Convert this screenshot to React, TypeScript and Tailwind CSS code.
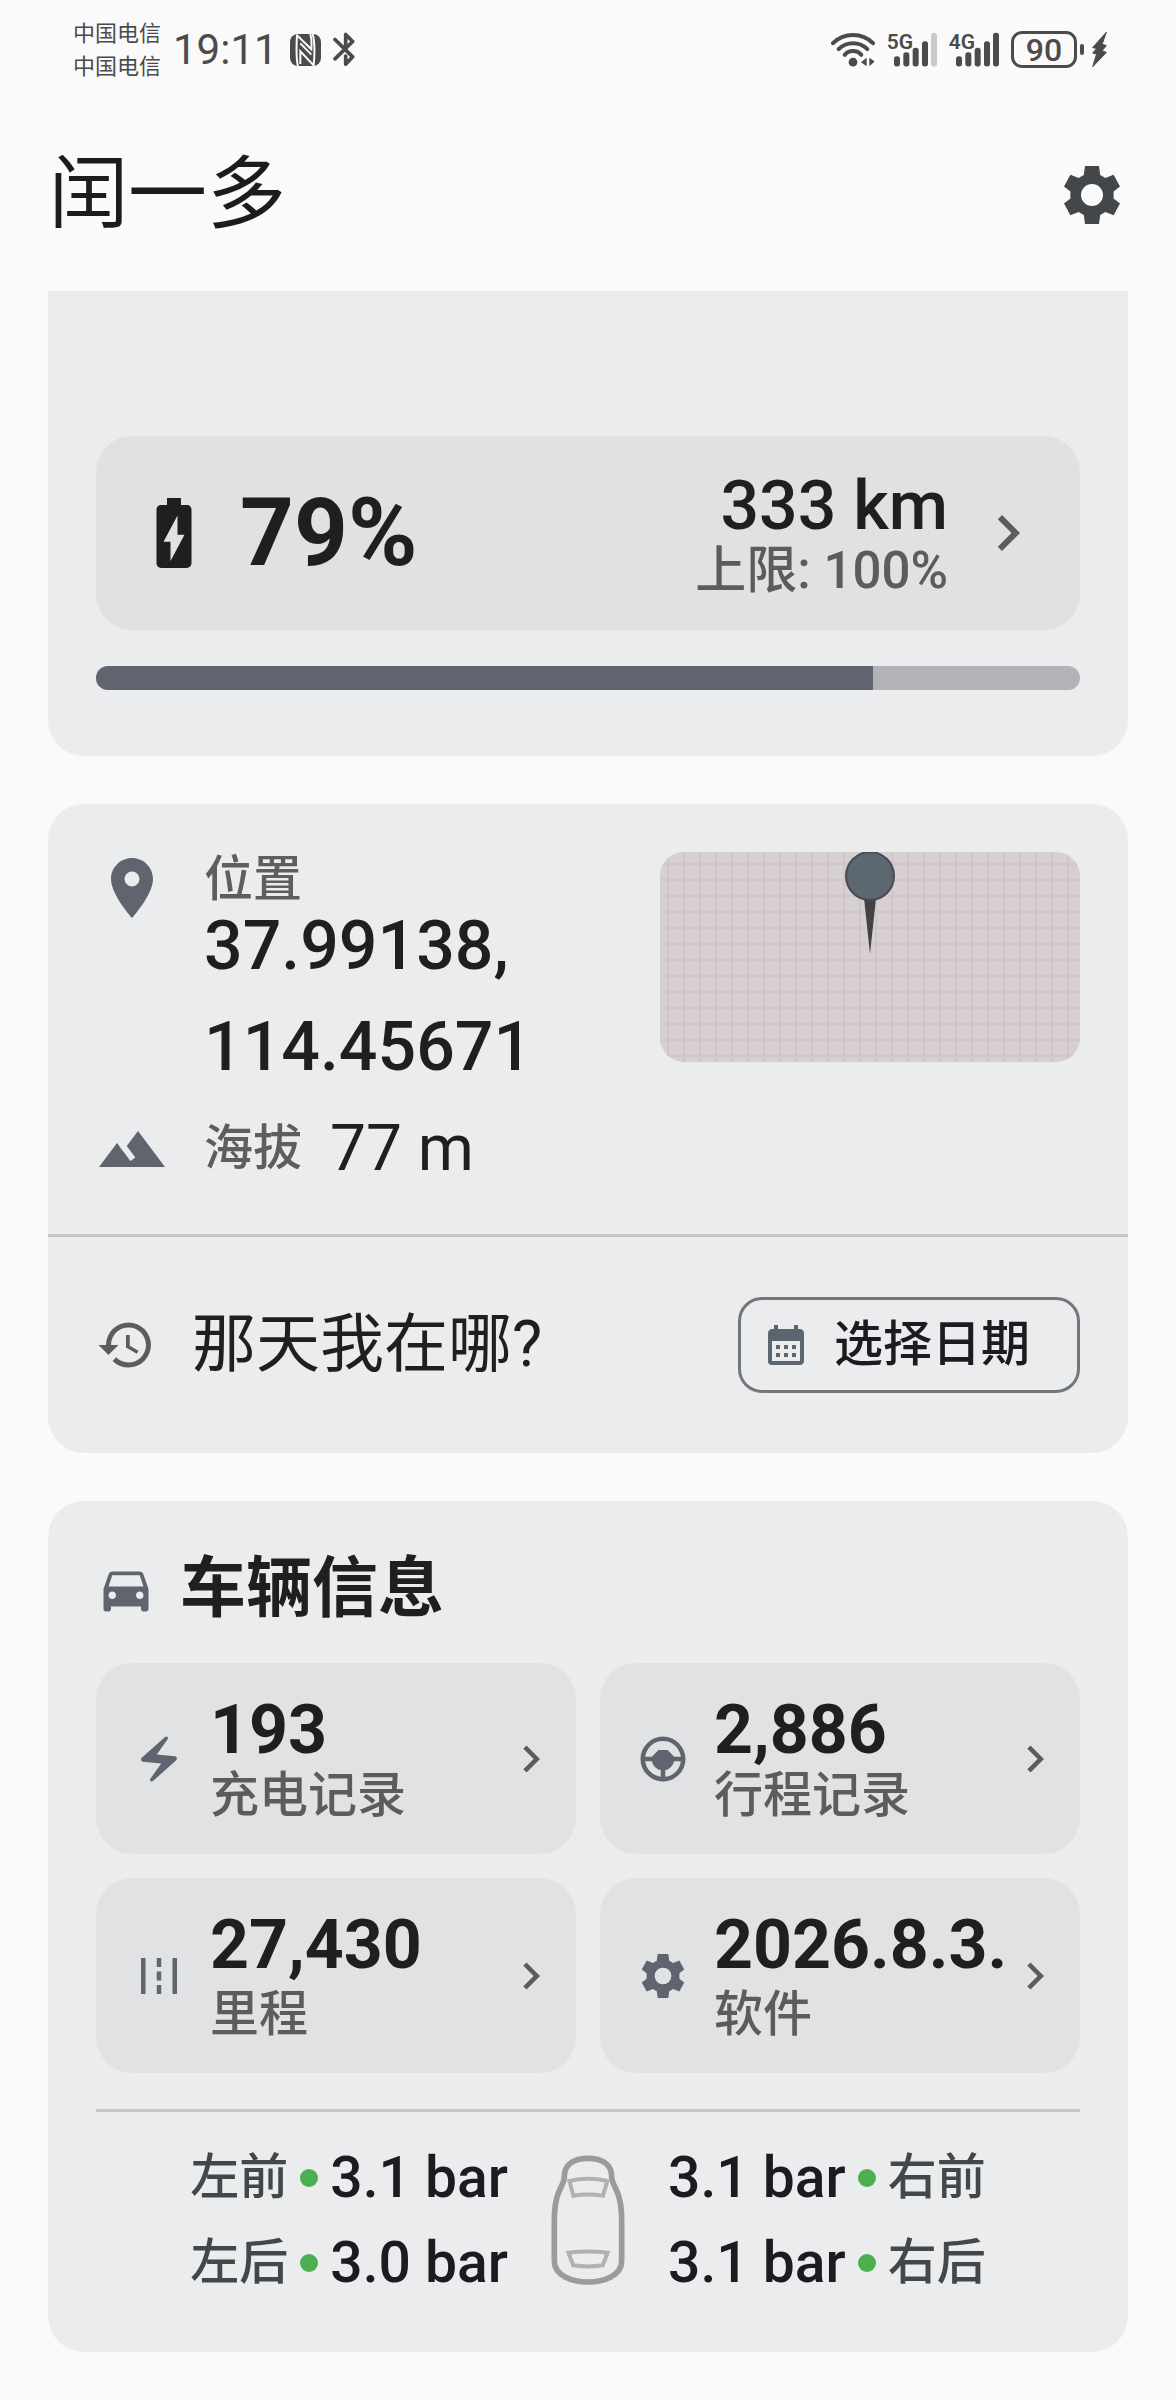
import type { ReactNode } from 'react';
import {
  MdBatteryChargingFull,
  MdCalendarMonth,
  MdChevronRight,
  MdDirectionsCar,
  MdElectricBolt,
  MdHistory,
  MdLocationOn,
  MdTerrain,
} from 'react-icons/md';

const charge = 79;

function GearIcon({ className }: { className: string }) {
  return (
    <svg viewBox="-29 -29 58 58" className={className} fill="currentColor" aria-hidden="true">
      <path
        fillRule="evenodd"
        d="M-7-29H7L8.2-20 13.4-17 21.6-20.3 28-8.6 21.6-3.6V3.6L28 8.6 21.6 20.3 13.4 17 8.2 20 7 29H-7L-8.2 20-13.4 17-21.6 20.3-28 8.6-21.6 3.6V-3.6L-28-8.6-21.6-20.3-13.4-17-8.2-20ZM11 0A11 11 0 1 0-11 0 11 11 0 1 0 11 0Z"
      />
    </svg>
  );
}

function SteeringIcon({ className }: { className: string }) {
  return (
    <svg viewBox="0 0 24 24" className={className} fill="currentColor" aria-hidden="true">
      <path d="M13,19.92C14.8,19.7 16.35,18.95 17.65,17.65C18.95,16.35 19.7,14.8 19.92,13H16.92C16.7,14 16.24,14.84 15.54,15.54C14.84,16.24 14,16.7 13,16.92V19.92M10,8H14L17,11H19.92C19.67,9.05 18.79,7.38 17.27,6C15.76,4.66 14,4 12,4C10,4 8.24,4.66 6.73,6C5.21,7.38 4.33,9.05 4.08,11H7L10,8M11,19.92V16.92C10,16.7 9.16,16.24 8.46,15.54C7.76,14.84 7.3,14 7.08,13H4.08C4.3,14.77 5.05,16.3 6.35,17.6C7.65,18.9 9.2,19.67 11,19.92M12,2C14.75,2 17.1,3 19.05,4.95C21,6.9 22,9.25 22,12C22,14.75 21,17.1 19.05,19.05C17.1,21 14.75,22 12,22C9.25,22 6.9,21 4.95,19.05C3,17.1 2,14.75 2,12C2,9.25 3,6.9 4.95,4.95C6.9,3 9.25,2 12,2Z" />
    </svg>
  );
}

function RoadIcon({ className }: { className: string }) {
  return (
    <svg viewBox="0 0 24 24" className={className} fill="currentColor" aria-hidden="true">
      <path d="M4 4h2v16H4zM18 4h2v16h-2zM11 4h2v4h-2zM11 10h2v4h-2zM11 16h2v4h-2z" />
    </svg>
  );
}

function Signal({ label, weak }: { label: string; weak?: boolean }) {
  return (
    <svg viewBox="0 0 150 116" className="w-[50px] h-[39px] mb-1 overflow-visible" fill="currentColor">
      <text x="-1" y="63" fontSize="63" fontWeight="600" fontFamily="'Liberation Sans Narrow', Roboto, sans-serif">
        {label}
      </text>
      <rect x="21" y="84" width="18" height="31" rx="8" />
      <rect x="49" y="72" width="18" height="43" rx="8" />
      <rect x="77" y="59" width="18" height="56" rx="8" />
      <rect x="105" y="39" width="18" height="76" rx="8" />
      <rect x="132" y="14" width="18" height="101" rx="8" opacity={weak ? 0.28 : 1} />
    </svg>
  );
}

function StatusBar() {
  return (
    <div className="h-[99px] pl-[73px] pr-[69px] flex items-center justify-between text-[#4b4b4b]">
      <div className="flex items-center">
        <div className="text-[22px] leading-[33px]">
          <p>中国电信</p>
          <p>中国电信</p>
        </div>
        <span className="ml-3 text-[42px] leading-[48px]">19:11</span>
        {/* NFC */}
        <svg viewBox="0 0 93 96" className="ml-3 w-[31px] h-8" aria-hidden="true">
          <rect width="93" height="96" rx="24" fill="currentColor" />
          <g fill="none" stroke="#fafafa" strokeWidth="6">
            <path d="M24 97C19 78 19 38 21 2" />
            <path d="M21 4L64 46C65 30 66 18 61 0" />
            <path d="M68 0C74 22 74 62 71 94L31 52V90" />
            <path d="M31 28L64 62" />
          </g>
        </svg>
        {/* Bluetooth */}
        <svg viewBox="0 0 66 104" className="ml-3 w-[22px] h-[35px]" fill="none" stroke="currentColor" strokeWidth="11" strokeLinejoin="round" strokeLinecap="round" aria-hidden="true">
          <path d="M6 22L59 74L38 96V72M6 80L59 28L38 7V48" />
        </svg>
      </div>

      <div className="flex items-center">
        <svg viewBox="0 0 132 104" className="w-11 h-[35px]" fill="none" stroke="currentColor" strokeWidth="12" strokeLinecap="round" aria-hidden="true">
          <path d="M6 33C38 0 94 0 126 33" />
          <path d="M23 51C46 27 86 27 109 51" />
          <path d="M41 68C54 53 78 53 91 68" />
          <circle cx="66" cy="90" r="13" fill="currentColor" stroke="none" />
          <path d="M107 77V102L90 90ZM115 77V102L131 88Z" fill="currentColor" stroke="none" />
        </svg>
        <div className="ml-3 flex gap-3">
          <Signal label="5G" weak />
          <Signal label="4G" />
        </div>
        <div className="ml-3 w-[66px] h-[37px] border-3 border-current rounded-[11px] flex items-center justify-center text-[32px] leading-8 font-medium">
          90
        </div>
        <span className="ml-[3px] w-1 h-[11px] rounded-full bg-current" />
        <svg viewBox="0 0 46 110" className="ml-2 w-[15px] h-[37px]" fill="currentColor" stroke="currentColor" strokeWidth="3" strokeLinejoin="round" aria-hidden="true">
          <path d="M44 2L2 49L14 52L2 66L14 69L2 108L44 64L31 59L44 43L31 39Z" />
        </svg>
      </div>
    </div>
  );
}

function MapPreview() {
  return (
    <svg className="w-[420px] h-[210px] shrink-0 rounded-3xl bg-[#d8d0d0]" viewBox="0 0 420 210" role="img" aria-label="地图">
      <defs>
        <pattern id="grid" x="7" y="11" width="16" height="16" patternUnits="userSpaceOnUse">
          <path d="M1 0V16M0 1H16" stroke="#cec6c7" strokeWidth="2" />
        </pattern>
      </defs>
      <rect width="420" height="210" fill="url(#grid)" />
      <path d="M204 46H216L210 102Z" fill="#424242" />
      <circle cx="210" cy="24" r="24" fill="#5d6770" stroke="#444c54" strokeWidth="2" />
    </svg>
  );
}

function CarTopView() {
  return (
    <svg viewBox="0 0 228 396" className="w-[76px] h-[132px]" fill="none" aria-hidden="true">
      <path
        d="M114 13C70 13 43 32 43 68C43 98 13 106 13 200V322C13 364 66 384 114 384C162 384 215 364 215 322V200C215 106 185 98 185 68C185 32 158 13 114 13Z"
        stroke="#9a9b9d"
        strokeWidth="17"
      />
      <path d="M58 81Q114 67 172 81L159 125Q114 118 70 125Z" stroke="#b0b1b3" strokeWidth="12" />
      <path d="M55 296Q114 289 173 296L158 334Q114 341 70 334Z" stroke="#b0b1b3" strokeWidth="12" />
    </svg>
  );
}

type StatProps = { icon: ReactNode; value: string; label: string; gap?: boolean };

function StatTile({ icon, value, label, gap }: StatProps) {
  return (
    <button className="flex items-center gap-6 pl-9 pr-[18px] py-7 rounded-[36px] bg-[#e1e2e4] text-left text-[#60646f]">
      {icon}
      <span className={`flex-1 min-w-0 pt-1 flex flex-col ${gap ? 'gap-1' : ''}`}>
        <span className="text-[68px] leading-[71px] font-bold text-[#1e1f21] whitespace-nowrap">{value}</span>
        <span className="text-[49px] leading-[60px] font-medium text-[#5b5c5e]">{label}</span>
      </span>
      <MdChevronRight className="w-[54px] h-[54px] -ml-6 shrink-0 text-[#5b5c5e]" />
    </button>
  );
}

function Pressure({ label, value, side }: { label: string; value: string; side: 'left' | 'right' }) {
  return (
    <div className={`h-[85px] flex items-center gap-3 ${side === 'right' ? 'flex-row-reverse' : ''}`}>
      <span className="text-[49px] leading-[60px] font-medium text-[#444749]">{label}</span>
      <span className="w-[18px] h-[18px] rounded-full bg-[#4caf50]" />
      <span className="text-[57px] leading-[60px] font-medium text-[#1c1b1f]">{value}</span>
    </div>
  );
}

export default function App() {
  const iconClass = 'w-[54px] h-[54px] shrink-0';

  const stats: StatProps[] = [
    { icon: <MdElectricBolt className={iconClass} />, value: '193', label: '充电记录' },
    { icon: <SteeringIcon className={iconClass} />, value: '2,886', label: '行程记录' },
    { icon: <RoadIcon className={iconClass} />, value: '27,430', label: '里程', gap: true },
    { icon: <GearIcon className="w-11 h-11 mx-[5px] shrink-0" />, value: '2026.8.3.', label: '软件', gap: true },
  ];

  return (
    <div className="min-h-screen bg-[#fafafa] text-[#1e1f21] font-[Roboto,'Noto_Sans_CJK_SC',sans-serif]">
      <StatusBar />

      <header className="h-48 pl-[49px] pr-[55px] flex items-center justify-between">
        <h1 className="text-[79px] leading-[96px] text-[#1c1b1f]">闰一多</h1>
        <button aria-label="设置" className="text-[#43474a]">
          <GearIcon className="w-[58px] h-[58px]" />
        </button>
      </header>

      <main className="px-12 pb-12 flex flex-col gap-12">
        <section className="pt-[145px] px-12 pb-[66px] rounded-b-[36px] bg-[#ebecee]">
          <button className="w-full h-[194px] px-9 flex items-center rounded-[36px] bg-[#e0e1e3] text-left">
            <MdBatteryChargingFull className="w-[84px] h-[84px]" />
            <span className="ml-6 text-[94px] leading-[96px] font-bold">{charge}%</span>
            <span className="ml-auto pt-1.5 flex flex-col items-end">
              <span className="text-[68px] leading-[70px] font-medium">333 km</span>
              <span className="text-[51px] leading-[60px] font-medium text-[#5b5c5e]">上限: 100%</span>
            </span>
            <MdChevronRight className="ml-6 w-[72px] h-[72px] text-[#5b5c5e]" />
          </button>
          <div
            role="progressbar"
            aria-label="电量"
            aria-valuenow={charge}
            className="mt-9 h-6 rounded-full bg-[#b2b3b7] overflow-hidden"
          >
            <div className="h-full bg-[#60646f]" style={{ width: `${charge}%` }} />
          </div>
        </section>

        <section className="rounded-[36px] bg-[#ebecee]">
          <div className="px-12 pt-12 pb-[49px]">
            <div className="flex items-start">
              <MdLocationOn className="w-[72px] h-[72px] shrink-0 text-[#60646f]" />
              <div className="ml-9 flex-1">
                <p className="text-[49px] leading-[56px] font-medium text-[#5d5e60]">位置</p>
                <p className="-mt-3 text-[68px] leading-[101px] font-medium">
                  37.99138,
                  <br />
                  114.45671
                </p>
              </div>
              <MapPreview />
            </div>
            <div className="mt-3.5 h-[73px] flex items-center">
              <MdTerrain className="w-[72px] h-[72px] text-[#60646f]" />
              <span className="ml-9 text-[49px] leading-[60px] font-medium text-[#5d5e60]">海拔</span>
              <span className="ml-7 text-[64px] leading-[72px]">77 m</span>
            </div>
          </div>

          <div className="h-[219px] px-12 flex items-center border-t-3 border-[#c4c5c7]">
            <MdHistory className="w-[60px] h-[60px] text-[#5b5c5e]" />
            <p className="ml-9 text-[64px] leading-[72px]">那天我在哪?</p>
            <button className="ml-auto h-24 pl-[21px] pr-[47px] flex items-center gap-6 border-3 border-[#74777a] rounded-3xl text-[#1c1b1f]">
              <MdCalendarMonth className="w-12 h-12 text-[#5b656f]" />
              <span className="text-[49px] leading-[60px] font-medium">选择日期</span>
            </button>
          </div>
        </section>

        <section className="px-12 pt-12 pb-[47px] rounded-[36px] bg-[#ebecee]">
          <div className="h-20 flex items-center gap-6">
            <MdDirectionsCar className="w-[60px] h-[60px] text-[#60646f]" />
            <h2 className="text-[66px] leading-[76px] font-bold">车辆信息</h2>
          </div>

          <div className="mt-[34px] grid grid-cols-2 gap-6">
            {stats.map((stat) => (
              <StatTile key={stat.label} {...stat} />
            ))}
          </div>

          <div className="mt-9 pt-[23px] grid grid-cols-[1fr_auto_1fr] items-center gap-x-[42px] border-t-3 border-[#c4c5c7]">
            <div className="flex flex-col items-end">
              <Pressure label="左前" value="3.1 bar" side="left" />
              <Pressure label="左后" value="3.0 bar" side="left" />
            </div>
            <CarTopView />
            <div className="flex flex-col items-start">
              <Pressure label="右前" value="3.1 bar" side="right" />
              <Pressure label="右后" value="3.1 bar" side="right" />
            </div>
          </div>
        </section>
      </main>
    </div>
  );
}
